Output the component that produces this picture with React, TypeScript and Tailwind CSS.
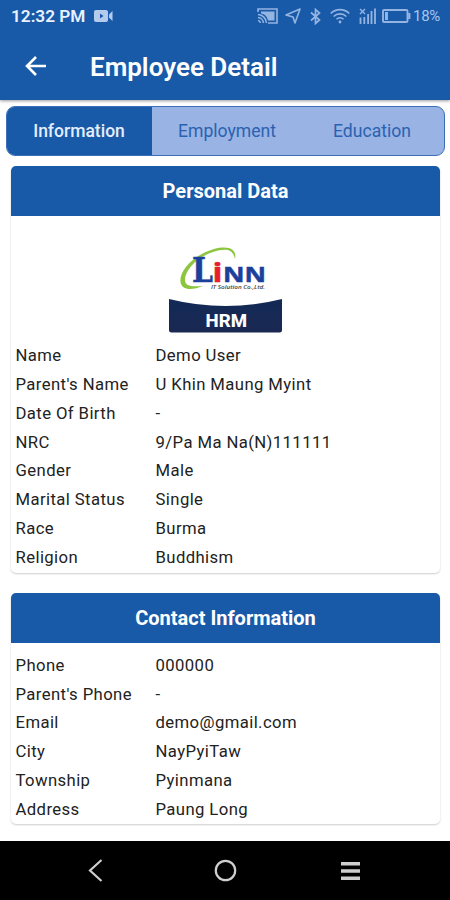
import { type ReactNode } from 'react'

interface fieldType {
  label: string
  value: string
}

const personalData: fieldType[] = [
  { label: 'Name', value: 'Demo User' },
  { label: "Parent's Name", value: 'U Khin Maung Myint' },
  { label: 'Date Of Birth', value: '-' },
  { label: 'NRC', value: '9/Pa Ma Na(N)111111' },
  { label: 'Gender', value: 'Male' },
  { label: 'Marital Status', value: 'Single' },
  { label: 'Race', value: 'Burma' },
  { label: 'Religion', value: 'Buddhism' },
]

const contactData: fieldType[] = [
  { label: 'Phone', value: '000000' },
  { label: "Parent's Phone", value: '-' },
  { label: 'Email', value: 'demo@gmail.com' },
  { label: 'City', value: 'NayPyiTaw' },
  { label: 'Township', value: 'Pyinmana' },
  { label: 'Address', value: 'Paung Long' },
]

const StatusBar = () => {
  return (
    <div className="flex h-8 items-center pl-[11px] pr-[10px] text-[#94b4e2]">
      <span className="pt-px text-[17.2px] font-semibold leading-none text-[#eaf1ff]">12:32 PM</span>
      {/* Screen recording */}
      <svg className="ml-[9px] shrink-0" width="19" height="14" viewBox="0 0 19 14" fill="#b4cbed">
        <rect x="0" y="1" width="14" height="12" rx="2" />
        <path d="M15 5.500 18.500 2v10L15 8.500z" />
        <path d="M6 4.500v5L9.500 7z" fill="#185aa8" />
      </svg>
      <div className="ml-auto flex items-center">
        {/* Cast */}
        <svg width="21" height="16" viewBox="0 0 21 16" fill="none" stroke="currentColor" strokeWidth="1.600">
          <path d="M1 4V1h19v14h-9" />
          <path d="M4 3.500h13.500v9H11C10 8 7.500 6 4 5.500z" fill="currentColor" stroke="none" />
          <path d="M1 12.500a3 3 0 0 1 2.500 2.500M1 9.500a6 6 0 0 1 5.500 5.500M1 6.500a9 9 0 0 1 8.500 8.500" />
        </svg>
        {/* Location */}
        <svg className="ml-[7px]" width="16" height="16" viewBox="0 0 16 16" fill="none" stroke="currentColor" strokeWidth="1.600" strokeLinejoin="round">
          <path d="M15 1 1 7l7 2 2 6z" />
        </svg>
        {/* Bluetooth */}
        <svg className="ml-[9px]" width="11" height="17" viewBox="0 0 11 17" fill="none" stroke="currentColor" strokeWidth="1.700">
          <path d="m1 4.500 8.500 7.500L5.500 15.500v-14L9.500 5 1 12.500" />
        </svg>
        {/* Wifi */}
        <svg className="ml-[9px]" width="20" height="16" viewBox="0 0 20 16" fill="none" stroke="currentColor" strokeWidth="1.600">
          <path d="M.7 5.500a13 13 0 0 1 18.600 0M3.600 8.500a9 9 0 0 1 12.800 0M6.500 11.300a5 5 0 0 1 7 0" />
          <circle cx="10" cy="14" r="1.400" fill="currentColor" stroke="none" />
        </svg>
        {/* Signal */}
        <svg className="ml-[9px]" width="17" height="16" viewBox="0 0 17 16" fill="none" stroke="currentColor" strokeWidth="1.800">
          <path d="M1.500 9.500V16M5.300 9V16M9.100 6v10M12.500 3v13M16 0.500V16" />
          <path d="m1 1 5 5m0-5L1 6" strokeWidth="1.400" />
        </svg>
        {/* Battery */}
        <svg className="ml-[6px]" width="29" height="14" viewBox="0 0 29 14" fill="none" stroke="currentColor" strokeWidth="1.900">
          <rect x="1" y="1" width="24.500" height="12" rx="1" />
          <path d="M3 3h3v8H3z" fill="currentColor" stroke="none" />
          <path d="M27.300 4v6" strokeWidth="2.200" />
        </svg>
        <span className="ml-[2px] pt-px text-[15px] leading-none tracking-[-0.3px] text-[#a9c4ec]">18%</span>
      </div>
    </div>
  )
}

const Logo = () => {
  return (
    <svg className="mx-auto shrink-0" width="114" height="90" viewBox="168 244 114 90">
      <defs>
        <linearGradient id="badge" x1="0" x2="0" y1="0" y2="1">
          <stop offset="0" stopColor="#122a56" />
          <stop offset="1" stopColor="#1a2852" />
        </linearGradient>
      </defs>
      <path
        d="M235 259C237 250 230 245 214 249C193 255 179 271 180.500 282C181.500 290 191 291 203 286C191 287 185 286 185 280C185 270 197 257 213 252C226 248 233 249 235 259Z"
        fill="#8cc63f"
      />
      <g fontWeight="700" fill="#1d3f9c" stroke="#1d3f9c" strokeWidth=".5">
        <text x="192" y="282" fontFamily="'DejaVu Serif', serif" fontSize="33" textLength="21" lengthAdjust="spacingAndGlyphs">L</text>
        <text x="212.500" y="282" fontFamily="'Open Sans', sans-serif" fontSize="27" fill="#e5202b" stroke="#e5202b" textLength="10" lengthAdjust="spacingAndGlyphs">i</text>
        <text x="223" y="282" fontFamily="'Open Sans', sans-serif" fontSize="21" textLength="43" lengthAdjust="spacingAndGlyphs">NN</text>
      </g>
      <text x="211" y="288.800" fontFamily="'Open Sans', sans-serif" fontSize="6" fontStyle="italic" fontWeight="600" fill="#3c3c3c" textLength="54" lengthAdjust="spacingAndGlyphs">
        IT Solution Co.,Ltd.
      </text>
      <path d="M169 299q56.500 14 113 0v31q0 2.500-2.500 2.500h-108q-2.500 0-2.500-2.500z" fill="url(#badge)" />
      <text x="205.500" y="327" fontFamily="Roboto, sans-serif" fontSize="18" fontWeight="800" fill="#fff" textLength="41.500" lengthAdjust="spacingAndGlyphs">
        HRM
      </text>
    </svg>
  )
}

const FieldList = ({ fields }: { fields: fieldType[] }) => {
  return (
    <dl>
      {fields.map((field, index) => (
        <div className="flex h-[28.75px] items-center pl-[5px] text-[16.7px] tracking-[0.4px] text-[#222]" key={index}>
          <dt className="w-[140px] shrink-0">{field.label}</dt>
          <dd>{field.value}</dd>
        </div>
      ))}
    </dl>
  )
}

const Card = ({ title, children }: { title: string; children: ReactNode }) => {
  return (
    <section className="overflow-hidden rounded-[5px] bg-white shadow-[0_1px_2px_rgba(0,0,0,0.2)]">
      <h2 className="flex h-[49.5px] items-center justify-center bg-[#185aa8] pl-px pt-px text-[20px] font-bold text-white">
        {title}
      </h2>
      {children}
    </section>
  )
}

const NavBar = () => {
  return (
    <nav className="mt-auto flex h-[59px] shrink-0 items-center bg-black pl-[88px] text-[#cfcfcf]">
      <svg width="15" height="23" viewBox="0 0 15 23" fill="none" stroke="currentColor" strokeWidth="2.200">
        <path d="M13.500 1 2 11.500 13.500 22" />
      </svg>
      <svg className="ml-[111px]" width="23" height="23" viewBox="0 0 23 23" fill="none" stroke="currentColor" strokeWidth="2.200">
        <circle cx="11.500" cy="11.500" r="9.700" />
      </svg>
      <svg className="ml-[104px]" width="19" height="18" viewBox="0 0 19 18" fill="currentColor">
        <path d="M0 0h19v3.500H0zM0 7.200h19V10.700H0zM0 14.500h19V18H0z" />
      </svg>
    </nav>
  )
}

const App = () => {
  return (
    <div className="flex h-[900px] w-[450px] flex-col overflow-hidden bg-white font-['Roboto',sans-serif]">
      <header className="h-[100px] shrink-0 bg-[#185aa8] shadow-[0_1px_3px_rgba(0,0,0,0.4)]">
        <StatusBar />
        <div className="flex h-[68px] items-center pl-[25px] text-white">
          <svg width="22" height="20" viewBox="0 0 22 20" fill="none" stroke="currentColor" strokeWidth="2.600">
            <path d="M21 10H2.500M11 1 2 10l9 9" />
          </svg>
          <h1 className="ml-[43px] pt-[2px] text-[26px] font-semibold leading-none">Employee Detail</h1>
        </div>
      </header>

      <div className="mx-[5.500px] mt-[5.500px] flex h-[50px] shrink-0 overflow-hidden rounded-[9px] border border-[#3d6fb8] bg-[#99b3e4] text-[17.6px]">
        <button type="button" className="w-[145px] bg-[#185aa8] pt-[2px] text-[17.5px] font-medium text-[#e4edfc]">
          Information
        </button>
        <button type="button" className="w-[151px] pt-[2px] text-[#2a62b0]">
          Employment
        </button>
        <button type="button" className="w-[139px] pt-[2px] text-[#2a62b0]">
          Education
        </button>
      </div>

      <main className="flex flex-col gap-5 px-[10.500px] pt-[10.500px]">
        <Card title="Personal Data">
          <div className="flex pb-[7.500px] pt-[28.500px]">
            <Logo />
          </div>
          <FieldList fields={personalData} />
          <div className="h-[1.5px]" />
        </Card>
        <Card title="Contact Information">
          <div className="pt-[8.500px]">
            <FieldList fields={contactData} />
          </div>
        </Card>
      </main>

      <NavBar />
    </div>
  )
}

export default App
